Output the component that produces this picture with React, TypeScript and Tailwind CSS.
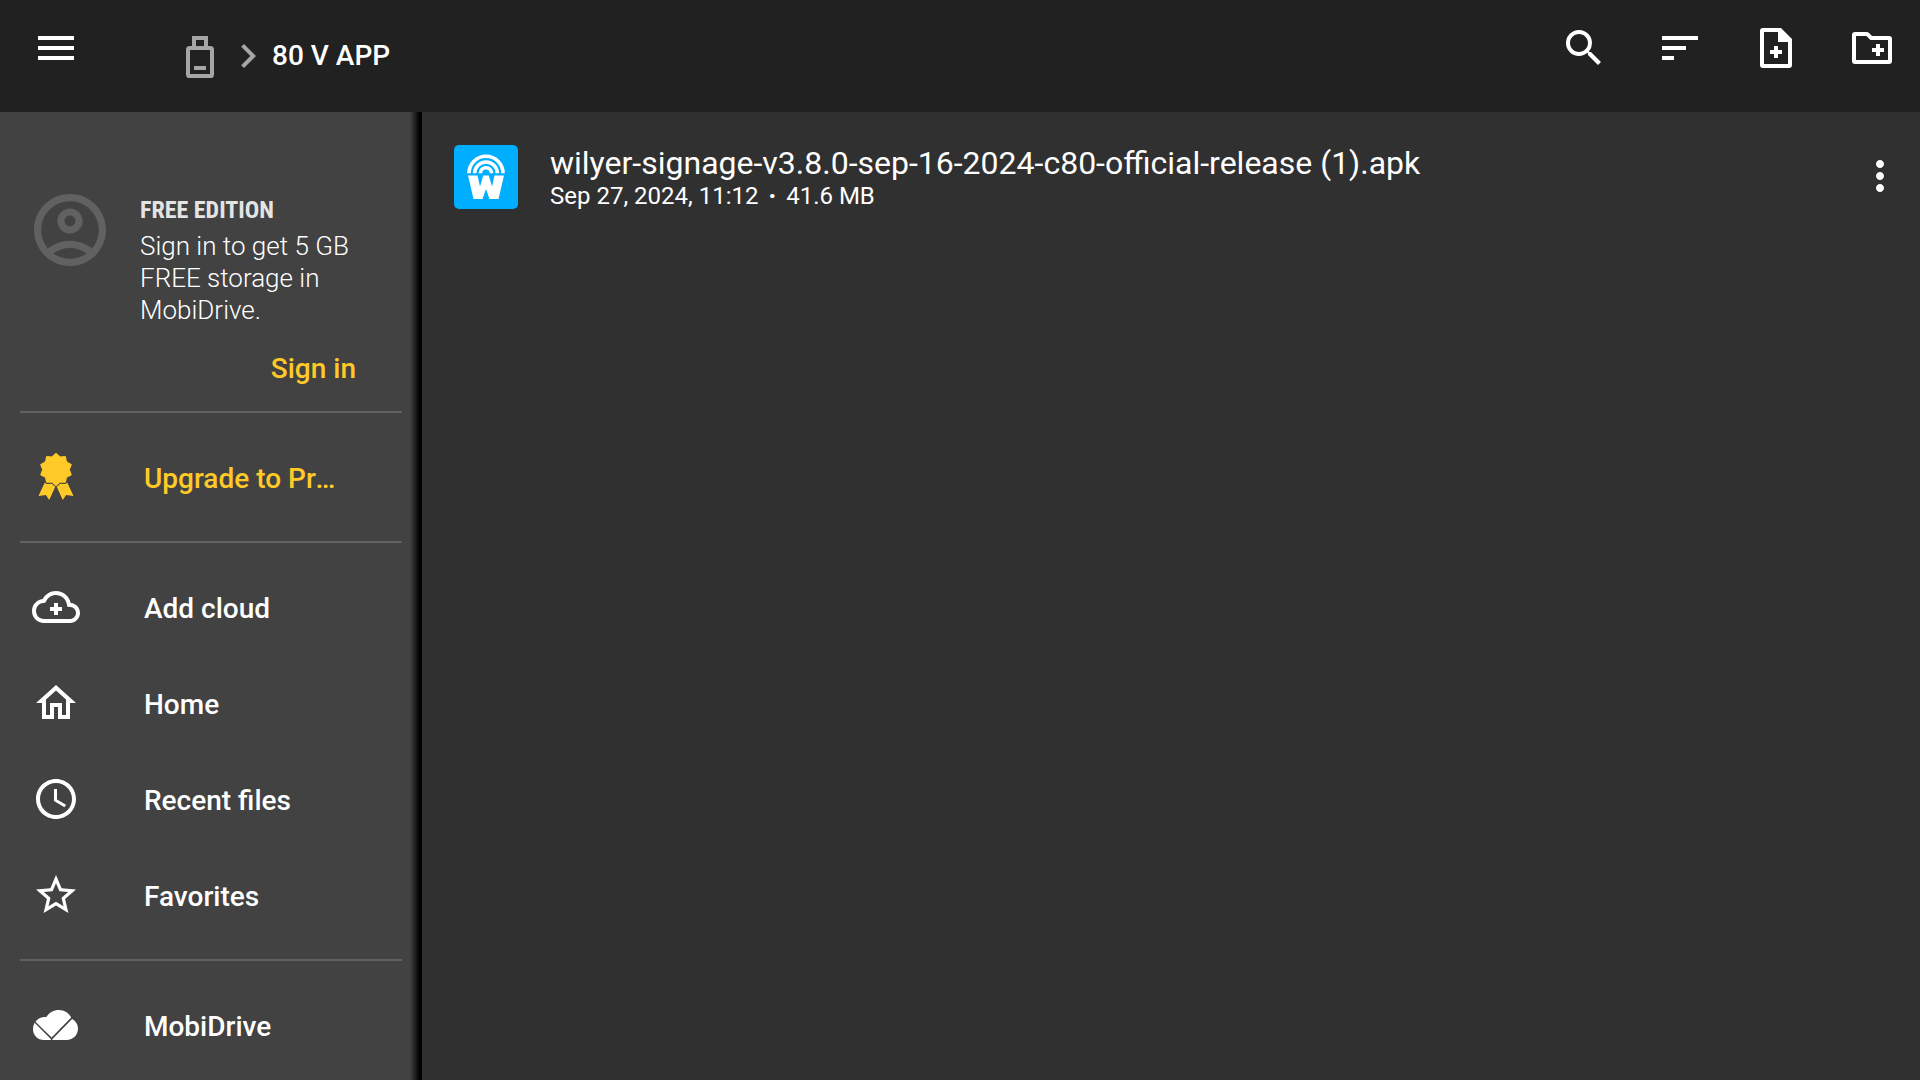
import React from 'react';
import { MdChevronRight, MdMenu, MdMoreVert, MdSearch, MdSort } from 'react-icons/md';

interface IconProps {
  className?: string;
}

const UsbIcon: React.FC<IconProps> = ({ className }) => (
  <svg viewBox="0 0 24 24" className={className} fill="none" stroke="currentColor" strokeWidth="2">
    <rect x="6" y="8" width="12" height="14" rx="0.8" />
    <path d="M9 8V3h6v5M9 18h6" />
  </svg>
);

const NewFileIcon: React.FC<IconProps> = ({ className }) => (
  <svg viewBox="0 0 24 24" className={className} fill="currentColor">
    <path fillRule="evenodd" d="M5.500 2H14.500L20 7.500V20.500a1.500 1.500 0 0 1-1.500 1.500h-13A1.500 1.500 0 0 1 4 20.500v-17A1.500 1.500 0 0 1 5.500 2zM6 4v16h12V9h-5V4z" />
    <path d="M11 11h2v2h2v2h-2v2h-2v-2H9v-2h2z" />
  </svg>
);

const NewFolderIcon: React.FC<IconProps> = ({ className }) => (
  <svg viewBox="0 0 24 24" className={className} fill="currentColor">
    <path fillRule="evenodd" d="M3.500 4h5.900c.4 0 .7.100 1 .4L12 6h8.500A1.500 1.500 0 0 1 22 7.500v11a1.500 1.500 0 0 1-1.500 1.500h-17A1.500 1.500 0 0 1 2 18.500v-13A1.500 1.500 0 0 1 3.500 4zM4 6v12h16V8h-8.800l-2-2z" />
    <path d="M14 10h2v2h2v2h-2v2h-2v-2h-2v-2h2z" />
  </svg>
);

const AccountIcon: React.FC<IconProps> = ({ className }) => (
  <svg viewBox="2 2 20 20" className={className} fill="currentColor">
    <path d="M12 2C6.480 2 2 6.480 2 12s4.480 10 10 10 10-4.480 10-10S17.520 2 12 2zM7.350 18.500C8.660 17.560 10.260 17 12 17s3.340.56 4.650 1.500c-1.310.94-2.910 1.500-4.650 1.500s-3.340-.56-4.650-1.500zm10.790-1.380C16.450 15.800 14.320 15 12 15s-4.450.8-6.140 2.120C4.700 15.730 4 13.950 4 12c0-4.420 3.580-8 8-8s8 3.580 8 8c0 1.950-.7 3.730-1.860 5.120z" />
    <path d="M12 6c-1.930 0-3.500 1.570-3.500 3.500S10.070 13 12 13s3.500-1.570 3.500-3.500S13.930 6 12 6zm0 5c-.83 0-1.500-.67-1.500-1.500S11.170 8 12 8s1.500.67 1.500 1.500S12.830 11 12 11z" />
  </svg>
);

const RibbonIcon: React.FC<IconProps> = ({ className }) => (
  <svg viewBox="0 0 48 48" className={className} fill="currentColor">
    <path
      stroke="currentColor"
      strokeWidth="2"
      strokeLinejoin="round"
      d="M24 1l3.800 3.400 5.200-.3 1.100 5.100 4.600 2.600-2 4.700 2 5-4.600 2.300-1.100 5-5.200-.2L24 32l-3.800-3.400-5.200.2-1.100-5-4.600-2.300 2-5-2-4.700 4.600-2.600L15 4.100l5.200.3z"
    />
    <path d="M12.800 29.500l1.700 1.400 5.200-.2 3.600 3L17.200 47l-3.300-5-7.400 1z" />
    <path d="M35.200 29.500l-1.700 1.400-5.200-.2-3.600 3L30.800 47l3.300-5 7.400 1z" />
  </svg>
);

const AddCloudIcon: React.FC<IconProps> = ({ className }) => (
  <svg viewBox="0 0 24 24" className={className} fill="currentColor">
    <path d="M19.350 10.040C18.670 6.590 15.640 4 12 4 9.110 4 6.600 5.640 5.350 8.040 2.340 8.360 0 10.910 0 14c0 3.310 2.690 6 6 6h13c2.760 0 5-2.240 5-5 0-2.640-2.050-4.780-4.650-4.960zM19 18H6c-2.210 0-4-1.790-4-4 0-2.050 1.530-3.760 3.560-3.970l1.070-.11.500-.95C8.080 7.140 9.940 6 12 6c2.620 0 4.880 1.860 5.390 4.430l.3 1.500 1.530.11c1.560.1 2.780 1.410 2.780 2.960 0 1.650-1.350 3-3 3z" />
    <path d="M11 10h2v2h2v2h-2v2h-2v-2H9v-2h2z" />
  </svg>
);

const HomeIcon: React.FC<IconProps> = ({ className }) => (
  <svg viewBox="0 0 24 24" className={className} fill="currentColor">
    <path d="M12 5.690l5 4.500V18h-2v-6H9v6H7v-7.810l5-4.500M12 3L2 12h3v8h6v-6h2v6h6v-8h3L12 3z" />
  </svg>
);

const ClockIcon: React.FC<IconProps> = ({ className }) => (
  <svg viewBox="0 0 24 24" className={className} fill="currentColor">
    <path d="M11.990 2C6.470 2 2 6.480 2 12s4.470 10 9.990 10C17.520 22 22 17.520 22 12S17.520 2 11.990 2zM12 20c-4.420 0-8-3.580-8-8s3.580-8 8-8 8 3.580 8 8-3.580 8-8 8zm.5-13H11v6l5.250 3.150.75-1.230-4.500-2.670z" />
  </svg>
);

const StarIcon: React.FC<IconProps> = ({ className }) => (
  <svg viewBox="0 0 24 24" className={className} fill="currentColor">
    <path d="M22 9.240l-7.190-.62L12 2 9.190 8.630 2 9.240l5.460 4.730L5.820 21 12 17.270 18.180 21l-1.630-7.030L22 9.240zM12 15.400l-3.760 2.270 1-4.280-3.320-2.880 4.380-.38L12 6.100l1.710 4.040 4.380.38-3.320 2.880 1 4.280L12 15.400z" />
  </svg>
);

const MobiDriveIcon: React.FC<IconProps> = ({ className }) => (
  <svg viewBox="0 0 48 48" className={className} fill="currentColor">
    <path d="M3.500 20.800C5.700 17.300 9.900 15.500 14.300 16 17.300 11.600 21.700 9 26.800 9c5.700 0 10.200 3 12.400 7.500L19.600 36.500z" />
    <path d="M2.600 21.800L18.800 38c.4.400.1 1-.4 1H12C5.800 39 1 34.300 1 28.200c0-2.400.6-4.600 1.600-6.400z" />
    <path d="M40.100 17.900c3.500 1.800 5.900 5.400 5.900 9.600C46 34 41 39 34.600 39H20.900c-.5 0-.8-.6-.4-1z" />
  </svg>
);

const WilyerLogo: React.FC<IconProps> = ({ className }) => (
  <svg viewBox="0 0 64 64" className={className}>
    <rect width="64" height="64" rx="5" fill="#00aeff" />
    <g fill="none" stroke="#fff" strokeWidth="3.600">
      <path d="M15 28.300a17 17 0 0 1 34 0" />
      <path d="M20.700 28.300a11.300 11.300 0 0 1 22.600 0" />
      <path d="M26.400 28.300a5.600 5.600 0 0 1 11.200 0" />
    </g>
    <path fill="#fff" d="M14 30.600h9.500l2.500 11 3.200-11h5.600l3.200 11 2.500-11H50L44.500 54h-9L32 44l-3.500 10h-9z" />
  </svg>
);

const mainLinks = [
  { label: 'Add cloud', icon: AddCloudIcon },
  { label: 'Home', icon: HomeIcon },
  { label: 'Recent files', icon: ClockIcon },
  { label: 'Favorites', icon: StarIcon },
];

const actions = [
  { label: 'Search', icon: MdSearch },
  { label: 'Sort', icon: MdSort },
  { label: 'New file', icon: NewFileIcon },
  { label: 'New folder', icon: NewFolderIcon },
];

interface NavItemProps {
  label: string;
  icon: React.ComponentType<IconProps>;
  accent?: boolean;
}

const NavItem: React.FC<NavItemProps> = ({ label, icon: Icon, accent }) => (
  <a href="#" className={`flex h-24 items-center gap-16 pl-8 pr-20 text-[28px] font-medium ${accent ? 'text-[#ffca28]' : 'text-white'}`}>
    <Icon className="size-12 shrink-0" />
    <span className="truncate pt-1">{label}</span>
  </a>
);

const Divider = () => <hr className="my-4 ml-5 mr-5 border-t-2 border-[#616161]" />;

const Header = () => (
  <header className="flex h-28 shrink-0 items-center bg-[#212121]">
    <button aria-label="Menu" className="self-start px-8 py-6">
      <MdMenu className="size-12" />
    </button>
    <nav aria-label="Path" className="flex flex-1 items-center pl-16">
      <a href="#" aria-label="USB storage" className="text-[#a6a6a6]">
        <UsbIcon className="size-12" />
      </a>
      <MdChevronRight className="size-12 text-[#a6a6a6]" />
      <span className="text-[28px] font-medium">80 V APP</span>
    </nav>
    <div className="flex self-start">
      {actions.map(({ label, icon: Icon }) => (
        <button key={label} aria-label={label} className="p-6">
          <Icon className="size-12" />
        </button>
      ))}
    </div>
  </header>
);

const Sidebar = () => (
  <aside className="relative w-[422px] shrink-0 overflow-hidden bg-[#424242]">
    <section className="flex gap-[34px] pl-[34px] pr-[66px] pt-20">
      <AccountIcon className="mt-0.5 size-[72px] shrink-0 text-[#616161]" />
      <div className="flex flex-1 flex-col">
        <h2 className="font-['Roboto_Condensed',Roboto,sans-serif] text-[24px] font-bold leading-9 text-[#e4e4e4]">FREE EDITION</h2>
        <p className="mt-0.5 text-[26px] font-light leading-8">Sign in to get 5 GB FREE storage in MobiDrive.</p>
        <button className="mt-4 self-end text-[28px] font-medium leading-[53px] text-[#ffca28]">Sign in</button>
      </div>
    </section>
    <nav aria-label="Storage">
      <Divider />
      <NavItem label="Upgrade to Premium" icon={RibbonIcon} accent />
      <Divider />
      {mainLinks.map((link) => (
        <NavItem key={link.label} label={link.label} icon={link.icon} />
      ))}
      <Divider />
      <NavItem label="MobiDrive" icon={MobiDriveIcon} />
    </nav>
    <div className="absolute inset-y-0 right-0 w-3 bg-linear-to-r from-transparent to-black to-80%"></div>
  </aside>
);

const App = () => (
  <div className="flex h-screen flex-col overflow-hidden bg-[#303030] font-[Roboto,sans-serif] text-white">
    <Header />
    <div className="flex min-h-0 flex-1">
      <Sidebar />
      <main className="min-w-0 flex-1">
        <ul>
          <li className="flex h-32 items-center pl-8 pr-4">
            <div className="flex min-w-0 flex-1 items-center gap-8 pt-0.5">
              <WilyerLogo className="size-16 shrink-0" />
              <div className="min-w-0 flex-1">
                <p className="truncate text-[32px] leading-[38px]">wilyer-signage-v3.8.0-sep-16-2024-c80-official-release (1).apk</p>
                <p className="flex gap-2.5 text-[24px] leading-7">
                  <span>Sep 27, 2024, 11:12</span>
                  <span className="font-black">·</span>
                  <span>41.6 MB</span>
                </p>
              </div>
            </div>
            <button aria-label="More options">
              <MdMoreVert className="size-12" />
            </button>
          </li>
        </ul>
      </main>
    </div>
  </div>
);

export default App;
